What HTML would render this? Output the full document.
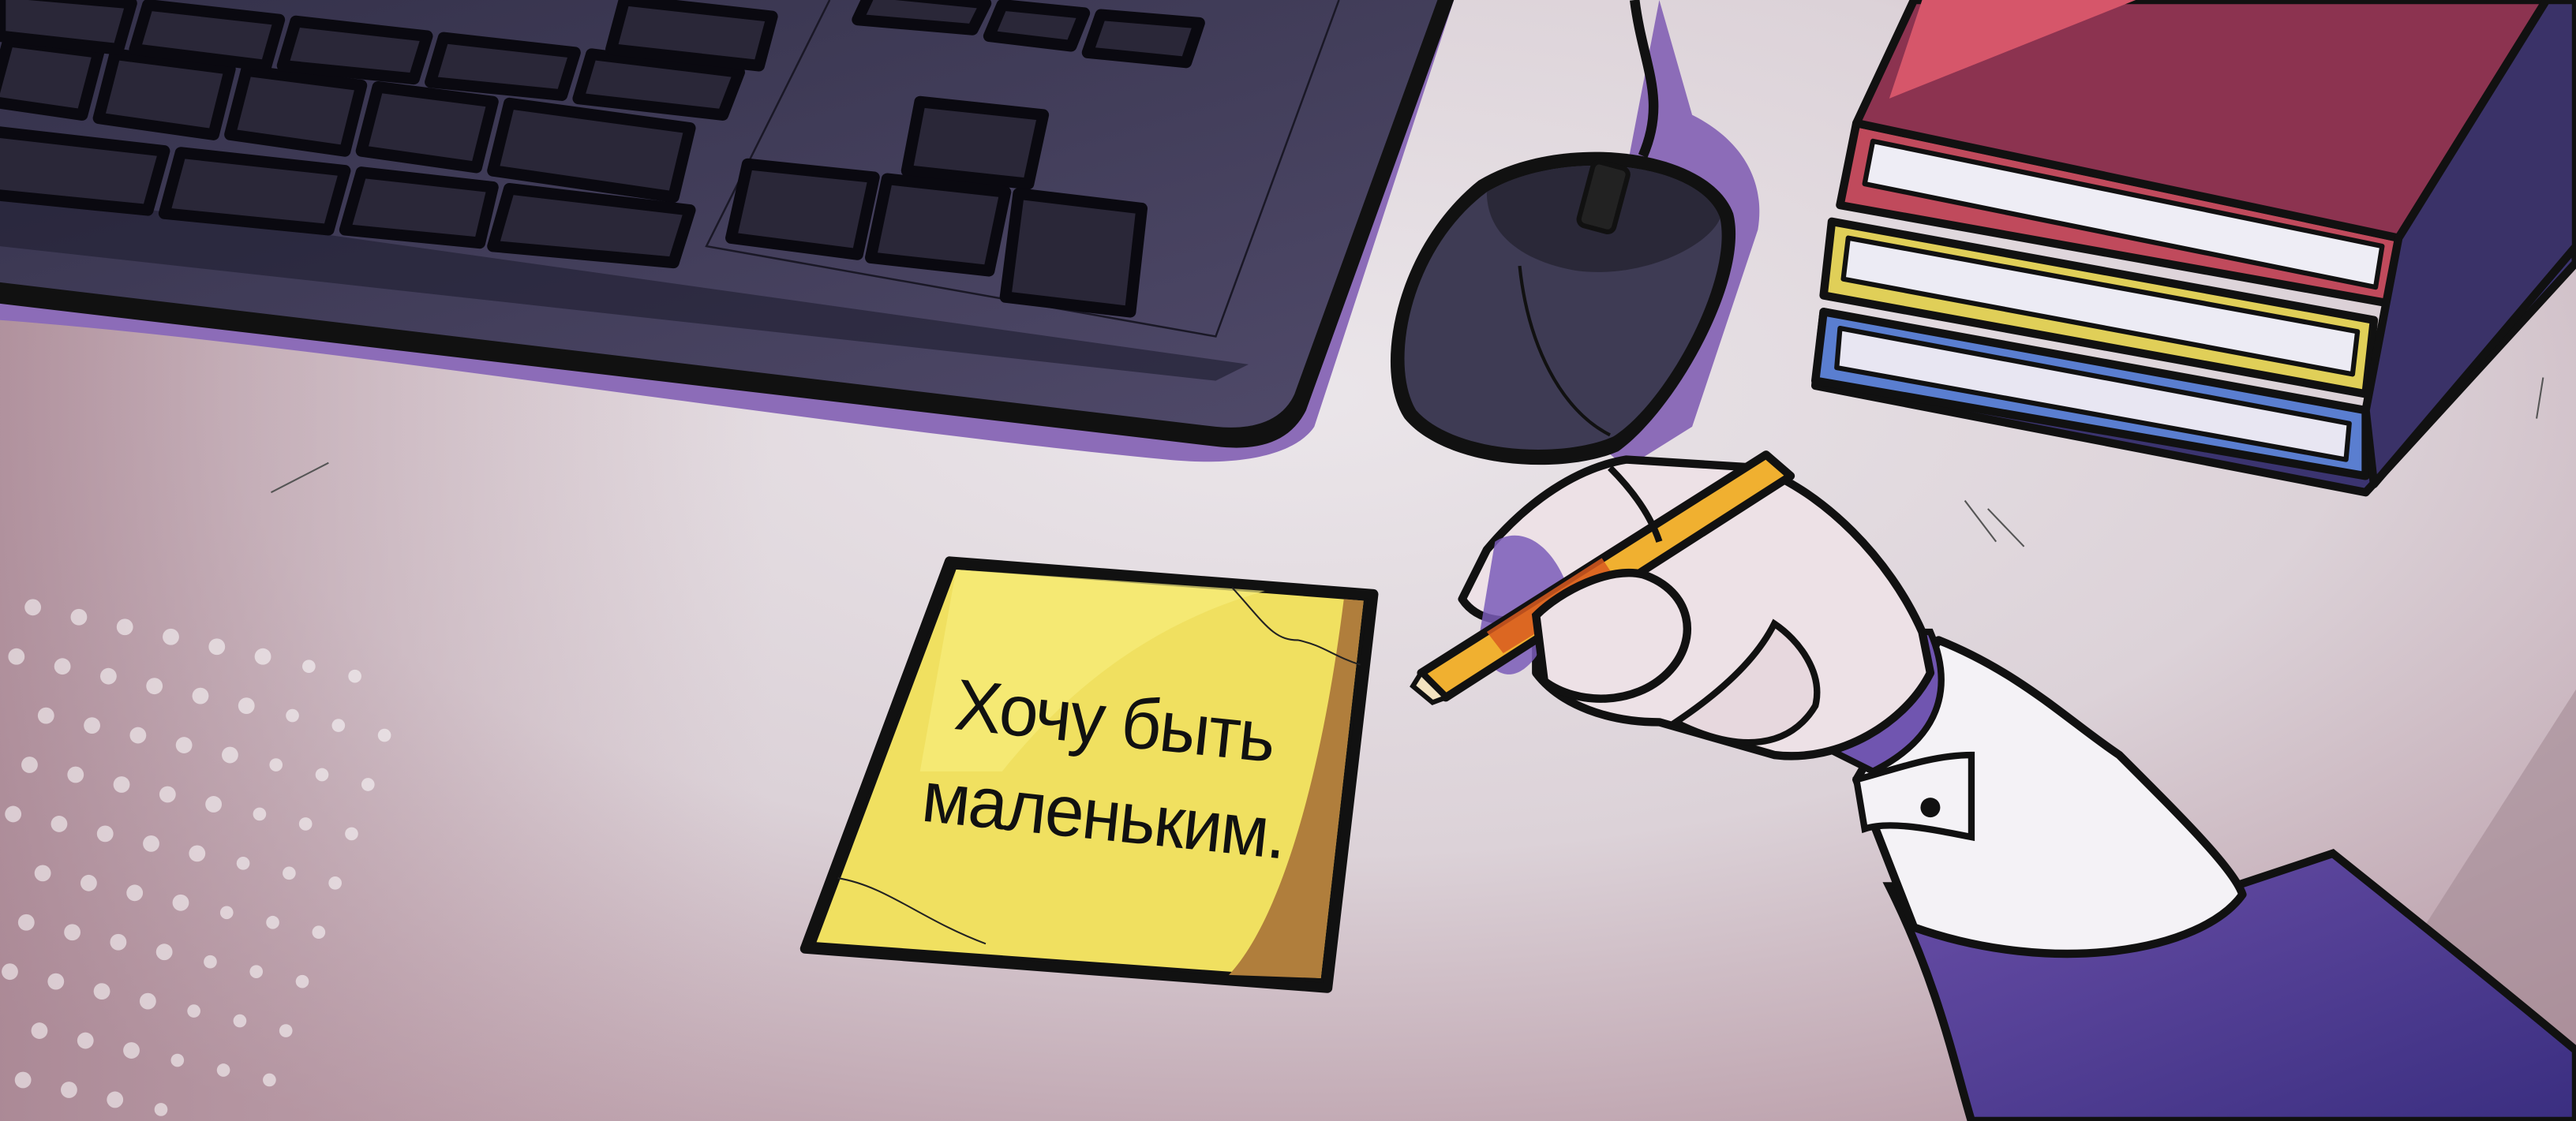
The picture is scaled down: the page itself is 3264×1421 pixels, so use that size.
<!DOCTYPE html>
<html><head><meta charset="utf-8"><style>
html,body{margin:0;padding:0;width:3264px;height:1421px;overflow:hidden;background:#e4dde2}
svg{display:block}
</style></head><body>
<svg width="3264" height="1421" viewBox="0 0 1568 683" preserveAspectRatio="none" xmlns="http://www.w3.org/2000/svg">
<defs>
<radialGradient id="bg" cx="0.5" cy="0.35" r="0.75">
<stop offset="0" stop-color="#ebe6ea"/><stop offset="0.55" stop-color="#dcd2d8"/><stop offset="1" stop-color="#b89aa6"/>
</radialGradient>
<linearGradient id="bgl" x1="0" y1="0" x2="1" y2="0">
<stop offset="0" stop-color="#a88592" stop-opacity="0.8"/><stop offset="0.3" stop-color="#c4a8b2" stop-opacity="0"/>
</linearGradient>
<linearGradient id="kb" x1="0" y1="0" x2="1" y2="1">
<stop offset="0" stop-color="#34314a"/><stop offset="1" stop-color="#504a6a"/>
</linearGradient>
<linearGradient id="sleeve" x1="0" y1="0" x2="1" y2="1">
<stop offset="0" stop-color="#6a4fa8"/><stop offset="1" stop-color="#3a2e80"/>
</linearGradient>
</defs>
<rect width="1568" height="683" fill="url(#bg)"/>
<rect width="1568" height="683" fill="url(#bgl)"/>
<path d="M1400 683 L1568 420 L1568 683Z" fill="#a48a94" opacity="0.6"/>
<g fill="#fff" opacity="0.55">
<circle cx="20" cy="370" r="5"/><circle cx="48" cy="376" r="5"/><circle cx="76" cy="382" r="5"/><circle cx="104" cy="388" r="5"/><circle cx="132" cy="394" r="5"/><circle cx="160" cy="400" r="5"/><circle cx="188" cy="406" r="4"/><circle cx="216" cy="412" r="4"/>
<circle cx="10" cy="400" r="5"/><circle cx="38" cy="406" r="5"/><circle cx="66" cy="412" r="5"/><circle cx="94" cy="418" r="5"/><circle cx="122" cy="424" r="5"/><circle cx="150" cy="430" r="5"/><circle cx="178" cy="436" r="4"/><circle cx="206" cy="442" r="4"/><circle cx="234" cy="448" r="4"/>
<circle cx="28" cy="436" r="5"/><circle cx="56" cy="442" r="5"/><circle cx="84" cy="448" r="5"/><circle cx="112" cy="454" r="5"/><circle cx="140" cy="460" r="5"/><circle cx="168" cy="466" r="4"/><circle cx="196" cy="472" r="4"/><circle cx="224" cy="478" r="4"/>
<circle cx="18" cy="466" r="5"/><circle cx="46" cy="472" r="5"/><circle cx="74" cy="478" r="5"/><circle cx="102" cy="484" r="5"/><circle cx="130" cy="490" r="5"/><circle cx="158" cy="496" r="4"/><circle cx="186" cy="502" r="4"/><circle cx="214" cy="508" r="4"/>
<circle cx="8" cy="496" r="5"/><circle cx="36" cy="502" r="5"/><circle cx="64" cy="508" r="5"/><circle cx="92" cy="514" r="5"/><circle cx="120" cy="520" r="5"/><circle cx="148" cy="526" r="4"/><circle cx="176" cy="532" r="4"/><circle cx="204" cy="538" r="4"/>
<circle cx="26" cy="532" r="5"/><circle cx="54" cy="538" r="5"/><circle cx="82" cy="544" r="5"/><circle cx="110" cy="550" r="5"/><circle cx="138" cy="556" r="4"/><circle cx="166" cy="562" r="4"/><circle cx="194" cy="568" r="4"/>
<circle cx="16" cy="562" r="5"/><circle cx="44" cy="568" r="5"/><circle cx="72" cy="574" r="5"/><circle cx="100" cy="580" r="5"/><circle cx="128" cy="586" r="4"/><circle cx="156" cy="592" r="4"/><circle cx="184" cy="598" r="4"/>
<circle cx="6" cy="592" r="5"/><circle cx="34" cy="598" r="5"/><circle cx="62" cy="604" r="5"/><circle cx="90" cy="610" r="5"/><circle cx="118" cy="616" r="4"/><circle cx="146" cy="622" r="4"/><circle cx="174" cy="628" r="4"/>
<circle cx="24" cy="628" r="5"/><circle cx="52" cy="634" r="5"/><circle cx="80" cy="640" r="5"/><circle cx="108" cy="646" r="4"/><circle cx="136" cy="652" r="4"/><circle cx="164" cy="658" r="4"/>
<circle cx="14" cy="658" r="5"/><circle cx="42" cy="664" r="5"/><circle cx="70" cy="670" r="5"/><circle cx="98" cy="676" r="4"/>
</g>
<path d="M0 150 L0 195 C200 210 500 260 710 280 C760 285 790 275 800 260 L885 0 L850 0 L770 240 Z" fill="#8c6cb8"/>
<path d="M0 0 L885 0 L795 250 C785 270 765 275 740 272 L0 185 Z" fill="#111" />
<path d="M0 0 L875 0 L788 240 C780 258 760 262 740 260 L0 172 Z" fill="url(#kb)"/>
<path d="M0 115 L0 150 L740 232 L760 222 Z" fill="#242236" opacity="0.7"/>
<path d="M505 0 L430 150 L740 205 L815 0" fill="none" stroke="#1a1826" stroke-width="1.2"/>
<g fill="#2a2738" stroke="#0a0910" stroke-width="7" stroke-linejoin="round">
<path d="M5 25 L60 32 L50 70 L-5 62Z"/><path d="M70 33 L140 42 L130 82 L60 72Z"/><path d="M150 43 L220 52 L210 92 L140 82Z"/><path d="M230 53 L300 62 L290 102 L220 92Z"/><path d="M310 63 L420 78 L410 120 L300 104Z"/>
<path d="M0 -5 L80 2 L72 30 L0 22Z"/><path d="M90 3 L170 12 L162 40 L82 30Z"/><path d="M180 13 L260 22 L252 48 L172 40Z"/><path d="M270 23 L350 32 L342 58 L262 50Z"/><path d="M360 33 L450 44 L440 70 L352 60Z"/><path d="M380 0 L470 10 L462 40 L372 30Z"/>
<path d="M-5 80 L100 92 L90 128 L-10 118Z"/><path d="M110 93 L210 104 L200 140 L100 130Z"/><path d="M220 105 L300 114 L292 148 L210 140Z"/><path d="M310 115 L420 128 L410 160 L300 150Z"/>
<path d="M530 -5 L600 2 L592 18 L522 12Z"/><path d="M610 3 L660 8 L652 28 L602 22Z"/><path d="M670 9 L730 14 L722 38 L662 32Z"/>
<path d="M560 62 L635 70 L626 112 L552 104Z"/><path d="M455 100 L532 108 L522 155 L445 145Z"/><path d="M540 109 L612 117 L602 165 L530 157Z"/><path d="M620 118 L695 127 L688 190 L612 181Z"/>
</g>
<path d="M1010 0 L1030 70 C1060 85 1075 110 1070 140 L1030 260 L990 285 L960 260 Z" fill="#8c6cb8"/>
<path d="M995 0 C1000 40 1015 60 1000 95" fill="none" stroke="#111" stroke-width="6"/>
<path d="M900 110 C950 80 1040 90 1055 130 C1065 170 1020 250 985 275 C950 290 880 285 855 255 C835 225 850 150 900 110Z" fill="#111"/>
<path d="M905 117 C950 90 1035 98 1047 133 C1055 170 1015 245 982 266 C950 280 885 276 862 250 C845 222 858 152 905 117Z" fill="#3e3b54"/>
<path d="M905 117 C950 90 1035 98 1047 133 C1040 150 1000 170 960 165 C930 160 905 145 905 117Z" fill="#2a2838"/>
<rect x="965" y="100" width="22" height="40" rx="4" transform="rotate(15 976 120)" fill="#222" stroke="#111" stroke-width="3"/>
<path d="M925 162 C930 210 950 250 980 265" fill="none" stroke="#111" stroke-width="2"/>
<g stroke="#111" stroke-width="5" stroke-linejoin="round">
<path d="M1110 190 L1440 255 L1560 50 L1568 160 L1440 300 L1105 235Z" fill="#3b3470"/>
<path d="M1110 190 L1440 250 L1440 290 L1105 232Z" fill="#5a7ed0"/>
<path d="M1120 200 L1430 258 L1428 280 L1118 224Z" fill="#e8e6f2" stroke-width="3"/>
<path d="M1115 135 L1445 195 L1440 240 L1110 180Z" fill="#e0cf58"/>
<path d="M1125 145 L1435 202 L1432 228 L1122 170Z" fill="#ecebf4" stroke-width="3"/>
<path d="M1130 75 L1460 145 L1455 185 L1120 125Z" fill="#c04a5c"/>
<path d="M1140 86 L1450 150 L1446 175 L1135 112Z" fill="#eeedf5" stroke-width="3"/>
<path d="M1165 0 L1550 0 L1460 145 L1130 75Z" fill="#8c3350"/>
<path d="M1460 145 L1550 0 L1568 0 L1568 150 L1445 295 L1440 250 Z" fill="#3a3268"/>
</g>
<path d="M1170 0 L1300 0 L1150 60 Z" fill="#d6566a"/>
<path d="M578 342 L836 362 L808 602 L490 578 Z" fill="#111" stroke="#111" stroke-width="6" stroke-linejoin="round"/>
<path d="M582 347 L830 366 L804 596 L497 574 Z" fill="#f0e060"/>
<path d="M818 365 L830 366 L804 596 L748 594 C780 560 805 470 818 365Z" fill="#b07e3c"/>
<path d="M582 347 L770 360 C700 380 650 420 610 470 L560 470Z" fill="#f7ed7c" opacity="0.7"/>
<path d="M750 358 C770 380 775 390 790 390 C805 393 812 400 828 405" fill="none" stroke="#222" stroke-width="1"/>
<path d="M510 535 C540 540 560 560 600 575" fill="none" stroke="#222" stroke-width="1"/>
<g font-family="'Liberation Sans','DejaVu Sans',sans-serif" fill="#111" font-size="44" letter-spacing="-1">
<text x="580" y="444" transform="rotate(6 580 444)" textLength="195" lengthAdjust="spacingAndGlyphs">Хочу быть</text>
<text x="560" y="500" transform="rotate(6 560 500)" textLength="222" lengthAdjust="spacingAndGlyphs">маленьким.</text>
</g>
<path d="M1150 540 C1180 600 1190 650 1200 683 L1568 683 L1568 640 C1520 600 1470 560 1420 520 L1360 540 Z" fill="url(#sleeve)" stroke="#111" stroke-width="5"/>
<path d="M1130 475 L1180 390 C1230 410 1260 440 1290 460 C1330 500 1360 530 1365 545 C1340 580 1250 595 1165 565 Z" fill="#f4f2f6" stroke="#111" stroke-width="5" stroke-linejoin="round"/>
<path d="M1130 475 C1150 470 1175 460 1200 460 L1200 510 C1175 505 1150 500 1135 505Z" fill="#f4f2f6" stroke="#111" stroke-width="4"/>
<circle cx="1175" cy="492" r="6" fill="#111"/>
<path d="M1175 385 C1190 420 1180 450 1140 470 L1110 455 C1140 430 1150 405 1150 385Z" fill="#7055b0" stroke="#111" stroke-width="4"/>
<path d="M1170 385 C1150 340 1110 300 1070 285 L990 280 C960 285 930 305 905 335 L890 365 C900 380 920 380 935 375 L935 410 C950 430 980 440 1010 440 L1080 460 C1120 465 1160 440 1175 410Z" fill="#ede1e6" stroke="#111" stroke-width="5" stroke-linejoin="round"/>
<path d="M910 330 C925 320 945 330 955 360 L935 400 C920 420 905 410 900 390Z" fill="#7a5cb8" opacity="0.85"/>
<path d="M1020 440 C1050 420 1070 400 1080 380 C1095 390 1110 410 1105 430 C1090 455 1060 460 1020 440Z" fill="#e7d8de" stroke="#111" stroke-width="4"/>
<path d="M865 410 L1075 277 L1090 290 L880 425 Z" fill="#f0b030" stroke="#111" stroke-width="5" stroke-linejoin="round"/>
<path d="M905 385 L975 340 L985 355 L915 398Z" fill="#d85a20" opacity="0.85"/>
<path d="M865 410 L880 425 L872 428 L860 418Z" fill="#f3e3c0" stroke="#111" stroke-width="3"/>
<path d="M935 375 C950 360 980 345 1000 350 C1030 360 1035 390 1015 410 C995 430 960 430 940 415Z" fill="#ede1e6" stroke="#111" stroke-width="5"/>
<path d="M980 285 C995 300 1005 315 1010 330" fill="none" stroke="#111" stroke-width="4"/>
<path d="M165 300 L200 282" stroke="#555" stroke-width="1"/>
<path d="M1196 305 L1215 330 M1210 310 L1232 333" stroke="#555" stroke-width="1"/>
<path d="M1548 230 L1544 255" stroke="#555" stroke-width="1"/>
</svg>
</body></html>
